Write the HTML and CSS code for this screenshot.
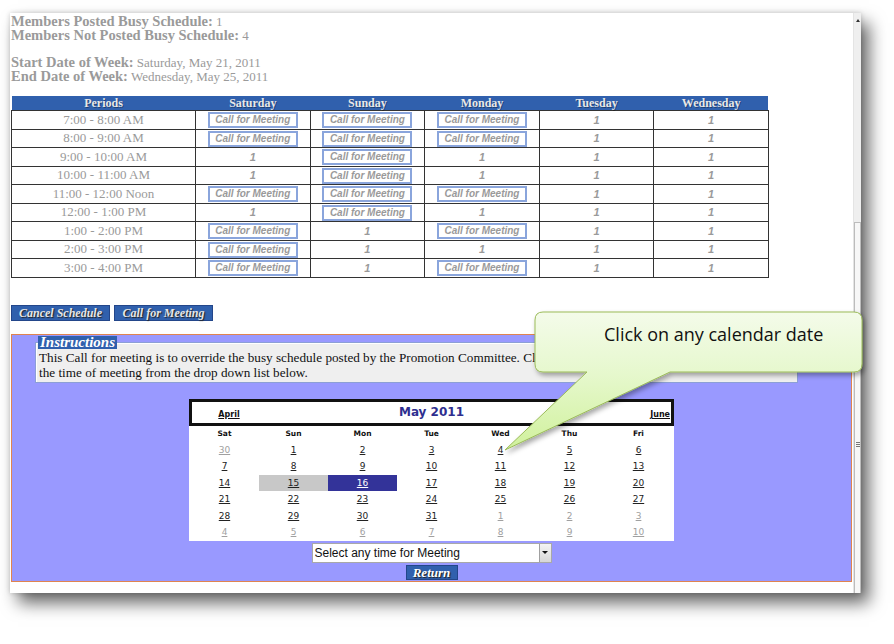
FILE: index.html
```html
<!DOCTYPE html>
<html>
<head>
<meta charset="utf-8">
<title>Call for Meeting</title>
<link rel="stylesheet" href="styles.css">
</head>
<body>
<div class="window">
  <div class="content">
    <div class="summary">
      <div class="line"><b>Members Posted Busy Schedule:</b> 1</div>
      <div class="line"><b>Members Not Posted Busy Schedule:</b> 4</div>
      <div class="blank"></div>
      <div class="line"><b>Start Date of Week:</b> Saturday, May 21, 2011</div>
      <div class="line"><b>End Date of Week:</b> Wednesday, May 25, 2011</div>
    </div>

    <table class="sched">
      <colgroup>
        <col class="c-per"><col class="c-day"><col class="c-day"><col class="c-day"><col class="c-day"><col class="c-day">
      </colgroup>
      <thead>
        <tr><th>Periods</th><th>Saturday</th><th>Sunday</th><th>Monday</th><th>Tuesday</th><th>Wednesday</th></tr>
      </thead>
      <tbody>
        <tr><td class="per">7:00 - 8:00 AM</td><td><span class="cfm">Call for Meeting</span></td><td><span class="cfm">Call for Meeting</span></td><td><span class="cfm">Call for Meeting</span></td><td class="one">1</td><td class="one">1</td></tr>
        <tr><td class="per">8:00 - 9:00 AM</td><td><span class="cfm">Call for Meeting</span></td><td><span class="cfm">Call for Meeting</span></td><td><span class="cfm">Call for Meeting</span></td><td class="one">1</td><td class="one">1</td></tr>
        <tr><td class="per">9:00 - 10:00 AM</td><td class="one">1</td><td><span class="cfm">Call for Meeting</span></td><td class="one">1</td><td class="one">1</td><td class="one">1</td></tr>
        <tr><td class="per">10:00 - 11:00 AM</td><td class="one">1</td><td><span class="cfm">Call for Meeting</span></td><td class="one">1</td><td class="one">1</td><td class="one">1</td></tr>
        <tr><td class="per">11:00 - 12:00 Noon</td><td><span class="cfm">Call for Meeting</span></td><td><span class="cfm">Call for Meeting</span></td><td><span class="cfm">Call for Meeting</span></td><td class="one">1</td><td class="one">1</td></tr>
        <tr><td class="per">12:00 - 1:00 PM</td><td class="one">1</td><td><span class="cfm">Call for Meeting</span></td><td class="one">1</td><td class="one">1</td><td class="one">1</td></tr>
        <tr><td class="per">1:00 - 2:00 PM</td><td><span class="cfm">Call for Meeting</span></td><td class="one">1</td><td><span class="cfm">Call for Meeting</span></td><td class="one">1</td><td class="one">1</td></tr>
        <tr><td class="per">2:00 - 3:00 PM</td><td><span class="cfm">Call for Meeting</span></td><td class="one">1</td><td class="one">1</td><td class="one">1</td><td class="one">1</td></tr>
        <tr><td class="per">3:00 - 4:00 PM</td><td><span class="cfm">Call for Meeting</span></td><td class="one">1</td><td><span class="cfm">Call for Meeting</span></td><td class="one">1</td><td class="one">1</td></tr>
      </tbody>
    </table>

    <div class="actions">
      <button class="btn btn-wide">Cancel Schedule</button>
      <button class="btn btn-wide">Call for Meeting</button>
    </div>

    <div class="panel">
      <fieldset class="instr">
        <legend>Instructions</legend>
        This Call for meeting is to override the busy schedule posted by the Promotion Committee. Click on any calendar date and select<br>
        the time of meeting from the drop down list below.
      </fieldset>

      <div class="cal">
        <div class="cal-title">
          <span class="cal-prev">April</span>
          <span class="cal-month">May 2011</span>
          <span class="cal-next">June</span>
        </div>
        <table class="cal-grid">
          <thead>
            <tr><th>Sat</th><th>Sun</th><th>Mon</th><th>Tue</th><th>Wed</th><th>Thu</th><th>Fri</th></tr>
          </thead>
          <tbody>
            <tr><td><span class="d other">30</span></td><td><span class="d">1</span></td><td><span class="d">2</span></td><td><span class="d">3</span></td><td><span class="d">4</span></td><td><span class="d">5</span></td><td><span class="d">6</span></td></tr>
            <tr><td><span class="d">7</span></td><td><span class="d">8</span></td><td><span class="d">9</span></td><td><span class="d">10</span></td><td><span class="d">11</span></td><td><span class="d">12</span></td><td><span class="d">13</span></td></tr>
            <tr><td><span class="d">14</span></td><td class="today"><span class="d">15</span></td><td class="sel"><span class="d">16</span></td><td><span class="d">17</span></td><td><span class="d">18</span></td><td><span class="d">19</span></td><td><span class="d">20</span></td></tr>
            <tr><td><span class="d">21</span></td><td><span class="d">22</span></td><td><span class="d">23</span></td><td><span class="d">24</span></td><td><span class="d">25</span></td><td><span class="d">26</span></td><td><span class="d">27</span></td></tr>
            <tr><td><span class="d">28</span></td><td><span class="d">29</span></td><td><span class="d">30</span></td><td><span class="d">31</span></td><td><span class="d other">1</span></td><td><span class="d other">2</span></td><td><span class="d other">3</span></td></tr>
            <tr><td><span class="d other">4</span></td><td><span class="d other">5</span></td><td><span class="d other">6</span></td><td><span class="d other">7</span></td><td><span class="d other">8</span></td><td><span class="d other">9</span></td><td><span class="d other">10</span></td></tr>
          </tbody>
        </table>
      </div>

      <div class="select">
        <span class="select-text">Select any time for Meeting</span>
        <span class="select-btn"><span class="select-arrow"></span></span>
      </div>
      <button class="btn btn-return">Return</button>
    </div>
  </div>

  <div class="scrollbar">
    <div class="sb-arrow"></div>
    <div class="sb-gap"></div>
    <div class="sb-thumb"><div class="sb-grip"></div></div>
  </div>
</div>

<div class="callout">
  <svg class="callout-svg" width="380" height="160" viewBox="0 0 380 160">
    <defs>
      <linearGradient id="cg" x1="0" y1="7" x2="0" y2="145" gradientUnits="userSpaceOnUse">
        <stop offset="0" stop-color="#f4fbea"/>
        <stop offset="0.45" stop-color="#e6f8cd"/>
        <stop offset="1" stop-color="#d0f19c"/>
      </linearGradient>
      <filter id="cs" x="-10%" y="-10%" width="130%" height="140%">
        <feDropShadow dx="2" dy="3" stdDeviation="2.5" flood-color="#000" flood-opacity="0.35"/>
      </filter>
    </defs>
    <path d="M48,7 H359 Q367,7 367,15 V59 Q367,67 359,67 H175 L10,145 L92,67 H48 Q40,67 40,59 V15 Q40,7 48,7 Z" fill="url(#cg)" stroke="#9bbb59" stroke-width="1" filter="url(#cs)"/>
  </svg>
  <div class="callout-text">Click on any calendar date</div>
</div>
</body>
</html>
```

FILE: styles.css
```css
html, body {
  margin: 0;
  background: #ffffff;
}

body {
  position: relative;
  width: 894px;
  height: 644px;
  overflow: hidden;
  padding: 13px 0 0 10px;
  box-sizing: border-box;
}

.window {
  width: 851px;
  height: 580px;
  display: flex;
  background: #ffffff;
  box-shadow: 0 0 5px rgba(0, 0, 0, 0.18), 8px 10px 16px rgba(0, 0, 0, 0.6);
}

.content {
  flex: none;
  width: 843px;
  height: 580px;
  overflow: hidden;
  padding: 1px 0 0 1px;
  box-sizing: border-box;
}

/* summary */
.summary {
  font-family: "Liberation Serif", serif;
  font-size: 13px;
  line-height: 14px;
  color: #9a9a9a;
}
.summary .line {
  height: 14px;
  white-space: nowrap;
}
.summary b {
  font-size: 14.5px;
}
.blank {
  height: 13px;
}

/* schedule table */
.sched {
  margin-top: 13px;
  border-collapse: collapse;
  table-layout: fixed;
  width: 757px;
}
.c-per { width: 184px; }
.c-day { width: 114.6px; }

.sched th {
  background: #3060ad;
  color: #e8e8e8;
  font-family: "Liberation Serif", serif;
  font-weight: bold;
  font-size: 12px;
  line-height: 14px;
  height: 14px;
  padding: 0;
  border: 0;
  text-shadow: 1px 1px 0 rgba(0, 0, 0, 0.35);
}
.sched td {
  border: 1px solid #333;
  height: 17.5px;
  padding: 0;
  text-align: center;
  vertical-align: middle;
  font-size: 11px;
  line-height: 16px;
}
.sched td.per {
  font-family: "Liberation Serif", serif;
  font-size: 13px;
  color: #9a9a9a;
}
.sched td.one {
  font-family: "Liberation Sans", sans-serif;
  font-style: italic;
  font-weight: bold;
  font-size: 11px;
  color: #9a9a9a;
}
.cfm {
  display: inline-block;
  width: 86px;
  height: 12px;
  line-height: 12px;
  border: 2px solid #8aa5dc;
  background: #fff;
  font-family: "Liberation Sans", sans-serif;
  font-style: italic;
  font-weight: bold;
  font-size: 10px;
  color: #9a9a9a;
  vertical-align: middle;
}

/* action buttons */
.actions {
  margin-top: 27px;
  display: flex;
  gap: 4px;
}
.btn {
  display: block;
  margin: 0;
  padding: 0;
  background: #3060ad;
  border: 1px solid #23468a;
  color: #e6e6e6;
  font-family: "Liberation Serif", serif;
  font-style: italic;
  font-weight: bold;
  font-size: 12px;
  line-height: 14px;
  text-shadow: 1px 1px 1px #222;
  box-sizing: border-box;
}
.btn-wide {
  width: 99px;
  height: 16px;
}

/* purple panel */
.panel {
  margin-top: 13px;
  width: 841px;
  height: 248px;
  box-sizing: border-box;
  border: 1px solid #e0844f;
  background: #9999ff;
}

.instr {
  margin: 1px 0 0 23px;
  width: 763px;
  box-sizing: border-box;
  padding: 1px 3px 2px 3px;
  border: 1px solid #8c9fd6;
  box-shadow: inset 1px 1px 0 #fff;
  background: #efefef;
  font-family: "Liberation Serif", serif;
  font-size: 13.2px;
  line-height: 15px;
  color: #111;
  white-space: nowrap;
}
.instr legend {
  padding: 0 2px;
  margin-left: -1px;
  background: #3060ad;
  color: #fff;
  font-family: "Liberation Serif", serif;
  font-style: italic;
  font-weight: bold;
  font-size: 15px;
  line-height: 13px;
}

/* calendar */
.cal {
  margin: 16px auto 0;
  width: 485px;
  background: #fff;
  font-family: "DejaVu Sans", sans-serif;
}
.cal-title {
  display: flex;
  align-items: center;
  height: 27px;
  box-sizing: border-box;
  border: 3px solid #111;
}
.cal-prev, .cal-next {
  flex: none;
  width: 74px;
  font-size: 8px;
  font-weight: bold;
  text-decoration: underline;
  color: #111;
  margin-top: 5px;
}
.cal-prev { text-align: center; }
.cal-next { text-align: right; padding-right: 1px; box-sizing: border-box; }
.cal-month {
  flex: 1;
  text-align: center;
  font-size: 12px;
  font-weight: bold;
  color: #2e2e8f;
}
.cal-grid {
  width: 483px;
  margin: 0 1px;
  border-collapse: collapse;
  table-layout: fixed;
}
.cal-grid th {
  height: 16px;
  padding: 0;
  font-size: 7.5px;
  font-weight: bold;
  color: #111;
}
.cal-grid td {
  height: 16.5px;
  padding: 0;
  text-align: center;
  font-size: 9px;
}
.d {
  color: #222;
  text-decoration: underline;
}
.d.other { color: #a0a0a0; }
.cal-grid td.today { background: #c8c8c8; }
.cal-grid td.sel { background: #333399; }
.cal-grid td.sel .d { color: #fff; }

/* select */
.select {
  margin: 2px auto 0;
  width: 240px;
  height: 20px;
  box-sizing: border-box;
  border: 1px solid #a8a8a8;
  background: #fff;
  display: flex;
  align-items: center;
}
.select-text {
  flex: 1;
  padding-left: 2px;
  font-family: "Liberation Sans", sans-serif;
  font-size: 12px;
  color: #111;
}
.select-btn {
  flex: none;
  width: 12px;
  height: 18px;
  box-sizing: border-box;
  border-left: 1px solid #a0a0a0;
  background: linear-gradient(#f4f4f4, #d6d6d6);
  display: flex;
  align-items: center;
  justify-content: center;
}
.select-arrow {
  width: 0;
  height: 0;
  border-left: 3px solid transparent;
  border-right: 3px solid transparent;
  border-top: 3px solid #111;
}
.btn-return {
  margin: 2px auto 0;
  width: 52px;
  height: 15px;
  font-size: 13px;
  line-height: 13px;
  color: #fff;
}

/* scrollbar */
.scrollbar {
  flex: none;
  width: 8px;
  height: 580px;
  overflow: hidden;
  background: #efefef;
  border-left: 1px solid #e4e4e4;
  box-sizing: border-box;
  display: flex;
  flex-direction: column;
}
.sb-arrow {
  flex: none;
  width: 0;
  height: 0;
  margin: 6px 0 0 2px;
  border-left: 2px solid transparent;
  border-right: 2px solid transparent;
  border-bottom: 3px solid #333;
}
.sb-gap {
  flex: none;
  height: 200px;
}
.sb-thumb {
  flex: none;
  height: 442px;
  border: 1px solid #bcbcbc;
  background: #f7f7f7;
  display: flex;
  align-items: center;
  justify-content: center;
}
.sb-grip {
  width: 4px;
  height: 5px;
  background: repeating-linear-gradient(#777 0 1px, transparent 1px 2px);
}

/* callout overlay */
.callout {
  position: absolute;
  left: 495px;
  top: 305px;
  width: 380px;
  height: 160px;
}
.callout-svg {
  position: absolute;
  left: 0;
  top: 0;
}
.callout-text {
  position: absolute;
  left: 109px;
  top: 17px;
  font-family: "Open Sans", sans-serif;
  font-size: 18px;
  line-height: 24px;
  color: #111;
  white-space: nowrap;
}
```
